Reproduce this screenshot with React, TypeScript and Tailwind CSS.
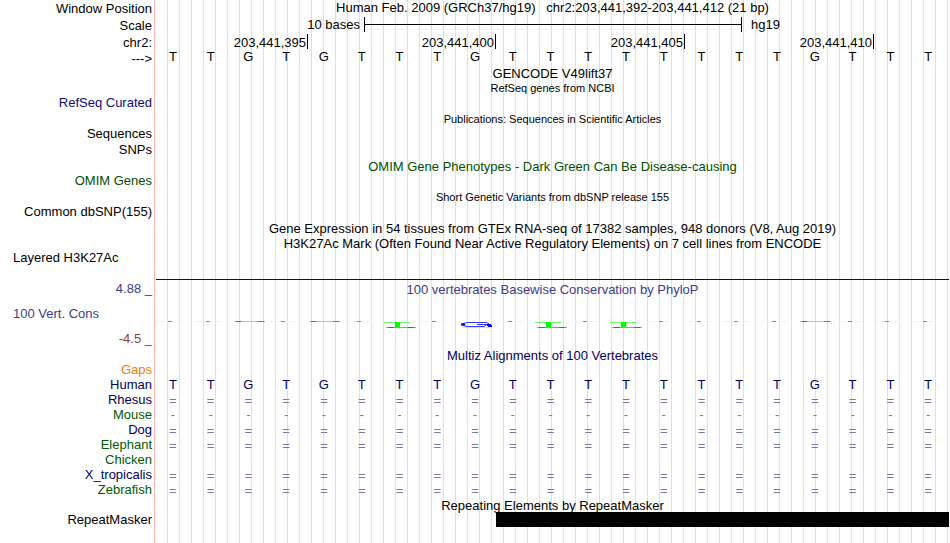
import type { ReactNode } from "react";

const BASES = "TTGTGTTTGTTTTTTTTGTTT".split("");
const TALL_T = [6, 10, 12];
const TALL_G = [8];

type RowProps = {
  label?: string;
  labelClass?: string;
  height: string;
  children?: ReactNode;
};

function Row({ label, labelClass = "text-right", height, children }: RowProps) {
  return (
    <div className={`grid grid-cols-[154px_minmax(0,1fr)] ${height}`}>
      <div className={`whitespace-pre pr-0.5 ${labelClass}`}>{label}</div>
      <div className="min-w-0">{children}</div>
    </div>
  );
}

function Title({ children, className = "" }: { children: ReactNode; className?: string }) {
  return <div className={`whitespace-pre pl-0.5 text-center ${className}`}>{children}</div>;
}

function Cells({ glyphs, className = "" }: { glyphs: string[]; className?: string }) {
  return (
    <div className={`grid grid-cols-21 pr-0.5 text-center ${className}`}>
      {glyphs.map((g, i) => (
        <span key={i}>{g}</span>
      ))}
    </div>
  );
}

function ConservationGlyph({ base, index }: { base: string; index: number }) {
  if (TALL_T.includes(index)) {
    return (
      <svg className="block h-2 w-9" viewBox="0 0 36 8" shapeRendering="crispEdges">
        <rect x="3" y="1" width="26" height="1" fill="#70f870" />
        <rect x="14" y="1" width="5" height="5" fill="#00ff00" />
        <rect x="5" y="6" width="30" height="1" fill="#9090f4" />
        <rect x="7" y="6" width="6" height="1" fill="#5555ee" />
        <rect x="27" y="6" width="6" height="1" fill="#5555ee" />
      </svg>
    );
  }
  if (TALL_G.includes(index)) {
    return (
      <svg className="block h-2 w-9" viewBox="0 0 36 8">
        <path d="M33 2.5 L30 1.5 H11 L6 3 V4 L11 5.5 H28 L31 3.5 H21" fill="none" stroke="#3838ff" />
        <path d="M5 3.5 H9 M31 4 H35 M32 5 H36" stroke="#0000ff" strokeWidth="2" />
        <path d="M6 6.5 H34" stroke="#e6dfb4" />
      </svg>
    );
  }
  if (base === "G") {
    return (
      <svg className="block h-2 w-9" viewBox="0 0 36 8" shapeRendering="crispEdges">
        <rect x="4" y="0" width="31" height="1" fill="#b4b4fa" />
        <rect x="6" y="0" width="5" height="1" fill="#5a5ae6" />
        <rect x="28" y="0" width="6" height="1" fill="#6a6aee" />
      </svg>
    );
  }
  return (
    <svg className="block h-2 w-9" viewBox="0 0 36 8" shapeRendering="crispEdges">
      <rect x="3" y="0" width="26" height="1" fill="#e8fce8" />
      <rect x="14" y="0" width="4" height="1" fill="#10e010" />
    </svg>
  );
}

const SPECIES = [
  { name: "Rhesus", color: "text-[#000064]", mark: "=" },
  { name: "Mouse", color: "text-[#005a00]", mark: "-" },
  { name: "Dog", color: "text-[#000064]", mark: "=" },
  { name: "Elephant", color: "text-[#005a00]", mark: "=" },
  { name: "Chicken", color: "text-[#005a00]", mark: "" },
  { name: "X_tropicalis", color: "text-[#000064]", mark: "=" },
  { name: "Zebrafish", color: "text-[#005a00]", mark: "=" },
];

export default function App() {
  return (
    <main className="min-h-screen bg-white bg-[linear-gradient(#ffb4b4,#ffb4b4),linear-gradient(#fff,#fff),repeating-linear-gradient(to_right,#dcdcf8_0_1px,transparent_1px_12px)] bg-[length:1px_100%,166px_100%,100%_100%] bg-[position:154px_0,0_0,11px_0] bg-no-repeat pr-px font-['Liberation_Sans',Arial,sans-serif] text-[13px] leading-[15px] text-black">
      <Row label="Window Position" labelClass="pt-px text-right" height="h-[17px]">
        <Title>{"Human Feb. 2009 (GRCh37/hg19)   chr2:203,441,392-203,441,412 (21 bp)"}</Title>
      </Row>
      <Row label="Scale" labelClass="pt-px text-right" height="h-[17px]">
        <div className="grid grid-cols-[210fr_378fr_205fr] pr-0.5">
          <span className="pr-1 text-right">10 bases</span>
          <span className="flex h-[15px] items-center border-x border-black">
            <span className="h-px w-full bg-black" />
          </span>
          <span className="pl-[9px]">hg19</span>
        </div>
      </Row>
      <Row label="chr2:" labelClass="pt-px text-right" height="h-[15px]">
        <div className="grid grid-cols-[154fr_188fr_189fr_189fr_73fr] pr-0.5 text-right">
          {["203,441,395", "203,441,400", "203,441,405", "203,441,410"].map((n) => (
            <span key={n} className="h-[15px] border-r border-black pr-px pt-px">
              {n}
            </span>
          ))}
        </div>
      </Row>
      <Row label="--->" labelClass="pt-0.5 text-right" height="h-[17px]">
        <Cells glyphs={BASES} />
      </Row>
      <Row height="h-[15px]">
        <Title>GENCODE V49lift37</Title>
      </Row>
      <Row height="h-[14px]">
        <Title className="text-[11px]">RefSeq genes from NCBI</Title>
      </Row>
      <Row label="RefSeq Curated" labelClass="text-right text-[#0c0c78]" height="h-4" />
      <Row height="h-[15px]">
        <Title className="pt-px text-[11px]">Publications: Sequences in Scientific Articles</Title>
      </Row>
      <Row label="Sequences" height="h-4" />
      <Row label="SNPs" height="h-[17px]" />
      <Row height="h-[14px]">
        <Title className="text-[#005000]">OMIM Gene Phenotypes - Dark Green Can Be Disease-causing</Title>
      </Row>
      <Row label="OMIM Genes" labelClass="text-right text-[#005000]" height="h-4" />
      <Row height="h-[15px]">
        <Title className="pt-px text-[11px]">Short Genetic Variants from dbSNP release 155</Title>
      </Row>
      <Row label="Common dbSNP(155)" height="h-[17px]" />
      <Row height="h-[15px]">
        <Title>Gene Expression in 54 tissues from GTEx RNA-seq of 17382 samples, 948 donors (V8, Aug 2019)</Title>
      </Row>
      <Row height="h-[14px]">
        <Title>H3K27Ac Mark (Often Found Near Active Regulatory Elements) on 7 cell lines from ENCODE</Title>
      </Row>
      <Row label="Layered H3K27Ac" labelClass="pl-[13px]" height="h-[29px]" />
      <Row height="h-[2px]">
        <div className="ml-0.5 h-px bg-[#1e0a1e]" />
      </Row>
      <Row label="4.88 _" labelClass="text-right text-[#3c3c8c]" height="h-[25px]">
        <Title className="pt-px text-[#3c3c8c]">100 vertebrates Basewise Conservation by PhyloP</Title>
      </Row>
      <Row label="100 Vert. Cons" labelClass="pl-[13px] text-[#3c3c8c]" height="h-[25px]">
        <div className="grid grid-cols-21 pr-0.5 pt-[15px]">
          {BASES.map((b, i) => (
            <ConservationGlyph key={i} base={b} index={i} />
          ))}
        </div>
      </Row>
      <Row label="-4.5 _" labelClass="text-right text-[#8c3c3c]" height="h-[17px]" />
      <Row height="h-[14px]">
        <Title className="text-[#000064]">Multiz Alignments of 100 Vertebrates</Title>
      </Row>
      <Row label="Gaps" labelClass="text-right text-[#e6820a]" height="h-[15px]" />
      <Row label="Human" labelClass="text-right text-[#000064]" height="h-[15px]">
        <Cells glyphs={BASES} className="text-[#000064]" />
      </Row>
      {SPECIES.map((s) => (
        <Row key={s.name} label={s.name} labelClass={`text-right ${s.color}`} height="h-[15px]">
          {s.mark && (
            <Cells
              glyphs={BASES.map(() => s.mark)}
              className={s.mark === "=" ? "pt-px text-[#7878aa]" : "text-[#7878aa]"}
            />
          )}
        </Row>
      ))}
      <Row height="h-[15px]">
        <Title className="pt-px">Repeating Elements by RepeatMasker</Title>
      </Row>
      <Row label="RepeatMasker" height="h-[15px]">
        <div className="grid grid-cols-[342fr_453fr]">
          <span className="col-start-2 h-[15px] bg-black" />
        </div>
      </Row>
    </main>
  );
}
